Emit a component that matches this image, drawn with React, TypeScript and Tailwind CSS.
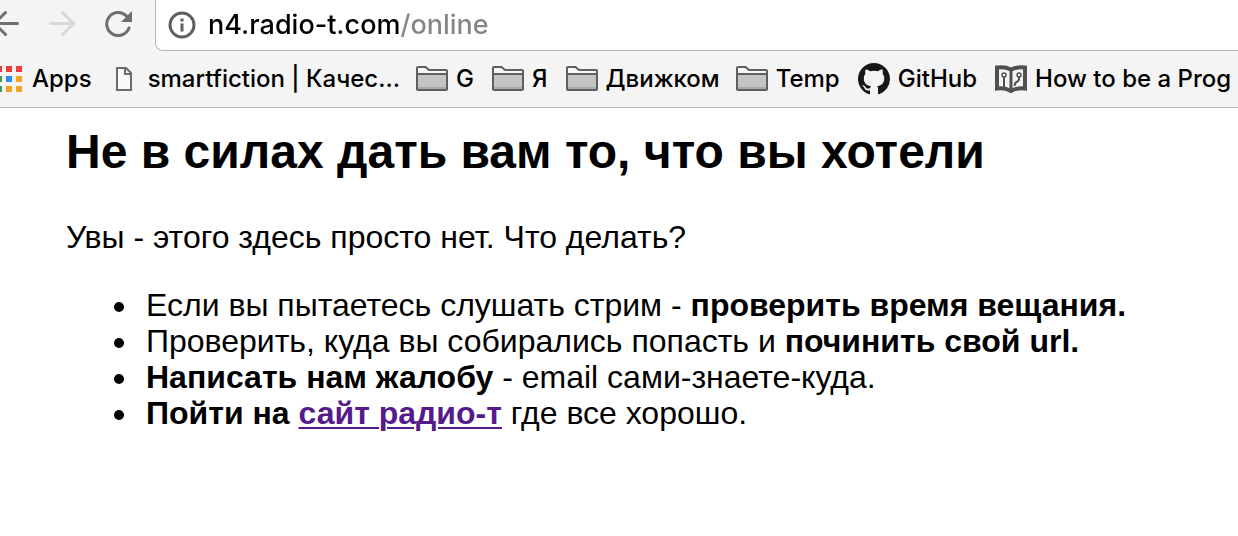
import { useState } from 'react'
import type { ReactNode } from 'react'

function BackIcon() {
  return (
    <svg width="20" height="28" viewBox="0 0 20 28" fill="none" stroke="#6e6e6e" strokeWidth="3" strokeLinecap="round" aria-hidden="true">
      <path d="M17.5 13.5H-6M5.5 2.5L-5.5 13.5L5.5 24.5" />
    </svg>
  )
}

function ForwardIcon() {
  return (
    <svg width="28" height="28" viewBox="0 0 28 28" fill="none" stroke="#d8d8d8" strokeWidth="3" strokeLinecap="round" aria-hidden="true">
      <path d="M2.5 13.5H24.5M14.5 2.5L25.5 13.5L14.5 24.5" />
    </svg>
  )
}

function ReloadIcon() {
  return (
    <svg width="28" height="28" viewBox="0 0 28 28" aria-hidden="true">
      <path d="M25 18A11.5 11.5 0 1 1 22.4 5.9" fill="none" stroke="#6e6e6e" strokeWidth="3" strokeLinecap="round" />
      <path d="M28 1V12H17Z" fill="#6e6e6e" />
    </svg>
  )
}

function InfoIcon() {
  return (
    <svg width="28" height="28" viewBox="0 0 28 28" aria-hidden="true">
      <circle cx="14" cy="14" r="12" fill="none" stroke="#5f5f5f" strokeWidth="3" />
      <path d="M12.5 7.5h3v3h-3zM12.5 12.5h3v8h-3z" fill="#5f5f5f" />
    </svg>
  )
}

function AppsIcon() {
  return (
    <svg width="22" height="26" viewBox="0 0 22 26" aria-hidden="true">
      <path d="M-4 0h6v6h-6zM6 0h6v6H6zM16 0h6v6h-6z" fill="#f03b3b" />
      <path d="M-4 10h6v6h-6zM-4 20h6v6h-6z" fill="#3a9b55" />
      <path d="M6 10h6v6H6z" fill="#2a8df4" />
      <path d="M16 10h6v6h-6zM6 20h6v6H6zM16 20h6v6h-6z" fill="#f0a324" />
    </svg>
  )
}

function PageIcon() {
  return (
    <svg width="16" height="24" viewBox="0 0 16 24" fill="none" stroke="#6b6b6b" strokeWidth="2" aria-hidden="true">
      <path d="M1 1H10L15 6V23H1Z" fill="#f9f9f9" />
      <path d="M9 1V7H15" />
    </svg>
  )
}

function FolderIcon() {
  return (
    <svg width="32" height="26" viewBox="0 0 32 26" aria-hidden="true">
      <path d="M1 23V2Q1 1 2 1H9.5L13 4H30Q31 4 31 5V23Q31 24 30 24H2Q1 24 1 23Z" fill="#f7f7f7" />
      <path d="M1 8H31V24H1Z" fill="#c4c4c4" />
      <path d="M1 21H31V23H1Z" fill="#a9a9a9" />
      <path d="M1 8H31M1 23V2Q1 1 2 1H9.5L13 4H30Q31 4 31 5V23Q31 24 30 24H2Q1 24 1 23Z" fill="none" stroke="#606060" strokeWidth="2" />
    </svg>
  )
}

function GitHubIcon() {
  return (
    <svg width="32" height="32" viewBox="0 0 16 16" fill="#191717" aria-hidden="true">
      <path d="M8 0C3.58 0 0 3.58 0 8c0 3.54 2.29 6.53 5.47 7.59.4.07.55-.17.55-.38 0-.19-.01-.82-.01-1.49-2.01.37-2.53-.49-2.69-.94-.09-.23-.48-.94-.82-1.13-.28-.15-.68-.52-.01-.53.63-.01 1.08.58 1.23.82.72 1.21 1.87.87 2.33.66.07-.52.28-.87.51-1.07-1.78-.2-3.64-.89-3.64-3.95 0-.87.31-1.59.82-2.15-.08-.2-.36-1.02.08-2.12 0 0 .67-.21 2.2.82.64-.18 1.32-.27 2-.27s1.36.09 2 .27c1.53-1.04 2.2-.82 2.2-.82.44 1.1.16 1.92.08 2.12.51.56.82 1.27.82 2.15 0 3.07-1.87 3.75-3.65 3.95.29.25.54.73.54 1.48 0 1.07-.01 1.93-.01 2.2 0 .21.15.46.55.38A8.01 8.01 0 0 0 16 8c0-4.42-3.58-8-8-8Z" />
    </svg>
  )
}

function BookIcon() {
  return (
    <svg width="32" height="30" viewBox="0 0 32 30" fill="none" stroke="#505050" aria-hidden="true">
      <path d="M2 3.5Q10 2.5 16 5.5Q22 2.5 30 3.5V24.5Q22 23.5 16 27Q10 23.5 2 24.5Z" fill="#f4f4f4" strokeWidth="4" />
      <path d="M16 5V27" strokeWidth="3" />
      <path d="M9 13V23M24 12.5V15Q24 17 21.5 18Q19.5 19 19.5 22" strokeWidth="2" />
      <circle cx="9" cy="11" r="2" strokeWidth="1.5" />
      <circle cx="24" cy="11" r="2" strokeWidth="1.5" />
    </svg>
  )
}

function Bookmark({ icon, label, className }: { icon: ReactNode; label: string; className: string }) {
  return (
    <a href="#" className={`flex shrink-0 items-center whitespace-nowrap ${className}`}>
      {icon}
      {label}
    </a>
  )
}

export default function App() {
  const [url, setUrl] = useState('n4.radio-t.com/online')

  return (
    <div className="min-h-screen overflow-hidden bg-white text-black">
      <header className="bg-[#f4f4f4] font-[Inter,sans-serif] font-medium">
        <div className="flex items-start">
          <nav className="flex items-center pt-2.5" aria-label="History">
            <button type="button" aria-label="Back" className="mr-7">
              <BackIcon />
            </button>
            <button type="button" aria-label="Forward" disabled className="mr-7">
              <ForwardIcon />
            </button>
            <button type="button" aria-label="Reload">
              <ReloadIcon />
            </button>
          </nav>
          <div className="ml-[23px] flex h-[51px] min-w-0 flex-1 items-center gap-3 rounded-bl-lg border-b border-l border-[#b4b4b4] bg-white pl-3">
            <InfoIcon />
            {/* host in black, path in grey */}
            <input
              type="text"
              aria-label="Address"
              value={url}
              onChange={(e) => setUrl(e.target.value)}
              className="min-w-0 flex-1 bg-[linear-gradient(90deg,#000_191px,#868686_191px)] bg-clip-text text-[27px] text-transparent caret-black outline-none"
            />
          </div>
        </div>

        <nav className="flex h-[57px] items-center overflow-hidden border-b border-[#b9b9b9] text-2xl" aria-label="Bookmarks">
          <Bookmark icon={<AppsIcon />} label="Apps" className="mr-6 gap-2.5" />
          <Bookmark icon={<PageIcon />} label="smartfiction | Качес..." className="mr-4 gap-4" />
          <Bookmark icon={<FolderIcon />} label="G" className="mr-4.5 gap-2" />
          <Bookmark icon={<FolderIcon />} label="Я" className="mr-4.5 gap-2" />
          <Bookmark icon={<FolderIcon />} label="Движком" className="mr-4 gap-2" />
          <Bookmark icon={<FolderIcon />} label="Temp" className="mr-4.5 gap-2" />
          <Bookmark icon={<GitHubIcon />} label="GitHub" className="mr-4.5 gap-2" />
          <Bookmark icon={<BookIcon />} label="How to be a Prog" className="gap-2" />
        </nav>
      </header>

      <main className="px-[66px] pt-4 font-['Liberation_Sans',Arial,sans-serif] text-[32px] leading-9">
        <h1 className="text-5xl leading-[56px] font-bold">Не в силах дать вам то, что вы хотели</h1>
        <p className="mt-[39px]">Увы - этого здесь просто нет. Что делать?</p>
        <ul className="mt-8 list-disc pl-[74px]">
          <li className="pl-1.5">
            Если вы пытаетесь слушать стрим - <b>проверить время вещания.</b>
          </li>
          <li className="pl-1.5">
            Проверить, куда вы собирались попасть и <b>починить свой url.</b>
          </li>
          <li className="pl-1.5">
            <b>Написать нам жалобу</b> - email сами-знаете-куда.
          </li>
          <li className="pl-1.5">
            <b>
              Пойти на{' '}
              <a href="#" className="text-[#551a8b] underline decoration-2 underline-offset-3">
                сайт радио-т
              </a>
            </b>{' '}
            где все хорошо.
          </li>
        </ul>
      </main>
    </div>
  )
}
